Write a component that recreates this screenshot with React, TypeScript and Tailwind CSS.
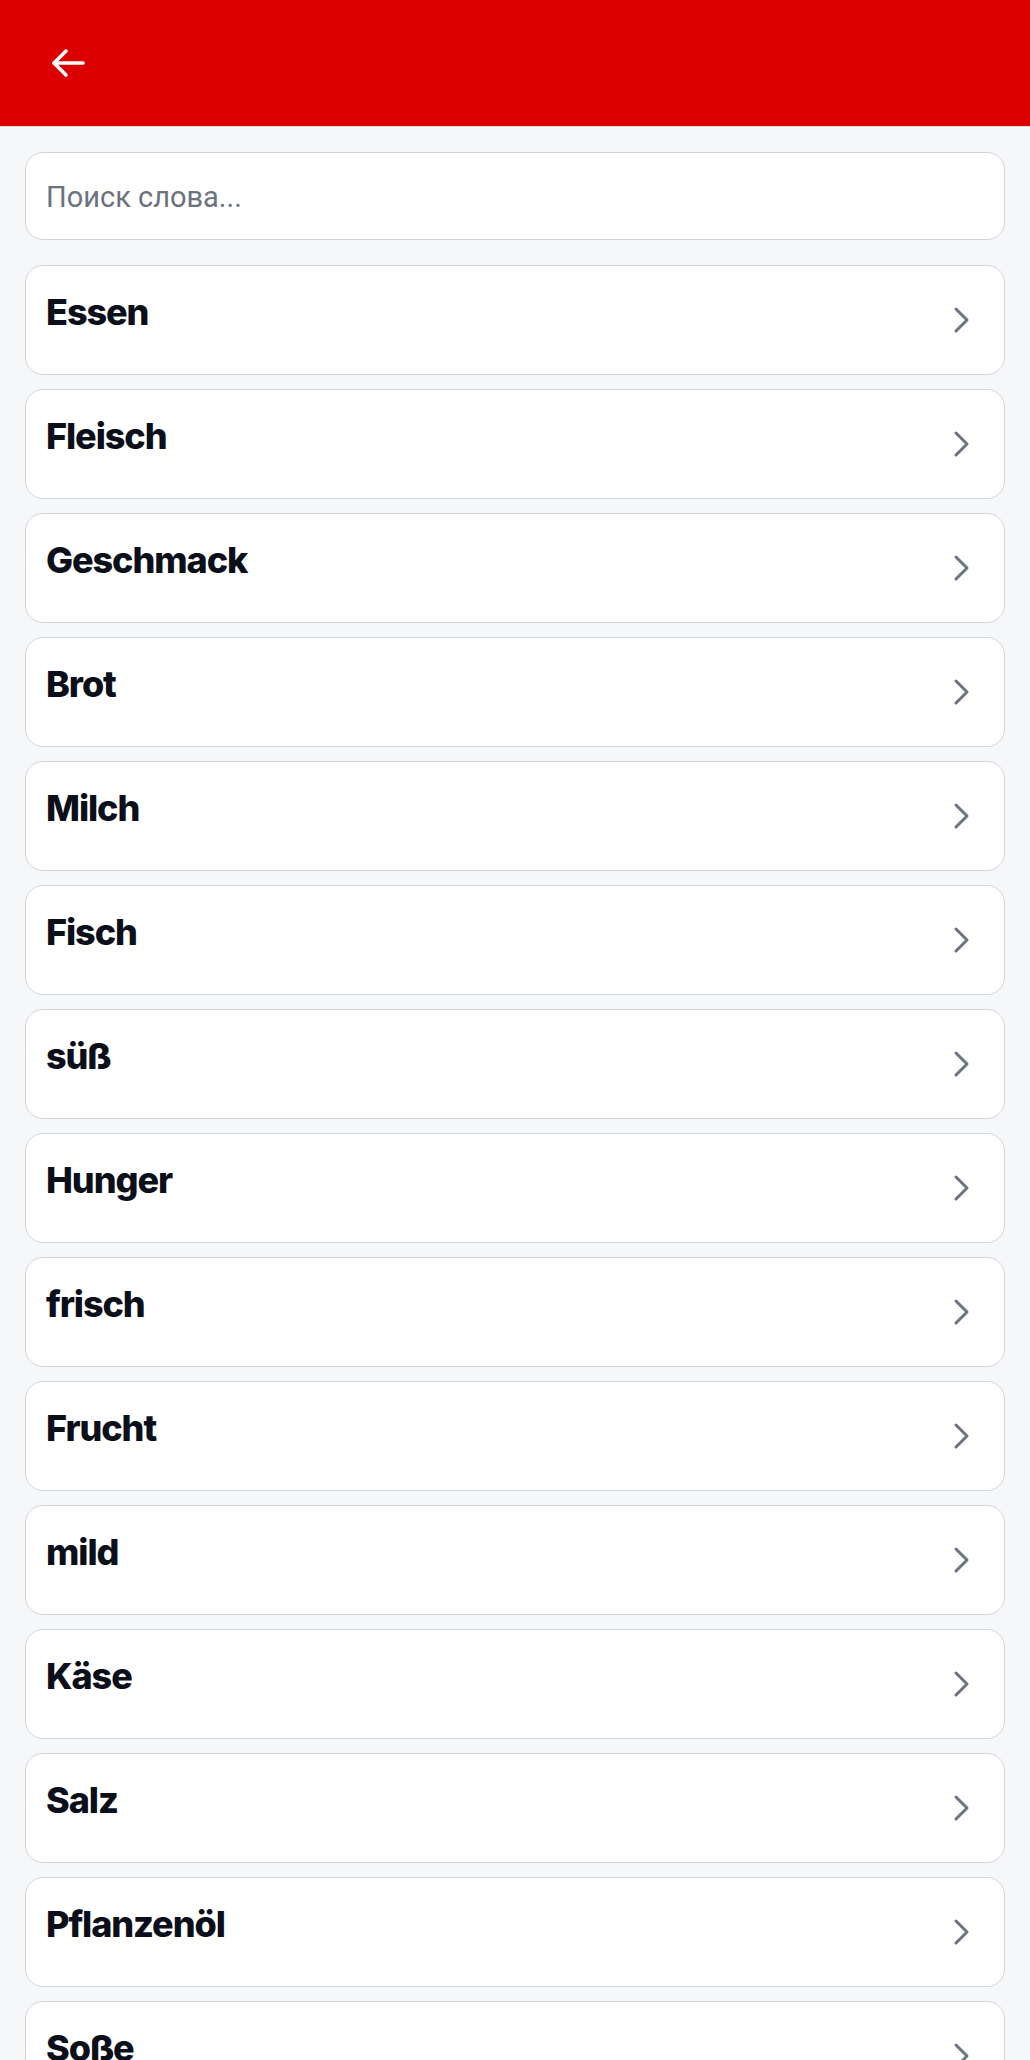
import React from 'react';

const words = [
  'Essen',
  'Fleisch',
  'Geschmack',
  'Brot',
  'Milch',
  'Fisch',
  'süß',
  'Hunger',
  'frisch',
  'Frucht',
  'mild',
  'Käse',
  'Salz',
  'Pflanzenöl',
  'Soße',
];

const BackArrow = () => (
  <svg width="36" height="32" viewBox="0 0 36 32" fill="none" stroke="white" strokeWidth="3.6" strokeLinecap="round" strokeLinejoin="round">
    <path d="M4 16h29" />
    <path d="M16 4 4 16l12 12" />
  </svg>
);

const Chevron = () => (
  <svg width="18" height="28" viewBox="0 0 18 28" fill="none" stroke="#6b7280" strokeWidth="3" strokeLinecap="round" strokeLinejoin="round">
    <path d="M3 3l11 11L3 25" />
  </svg>
);

const WordCard = ({ word }: { word: string }) => (
  <div className="flex h-[110px] shrink-0 items-start justify-between rounded-[18px] border border-[#d1d4d9] bg-white pl-[20px] pr-[33px]">
    <div className="pt-[24px] text-[36px] font-extrabold leading-[45px] tracking-[-0.03em] text-[#0b0f1a]">
      {word}
    </div>
    <div className="self-center">
      <Chevron />
    </div>
  </div>
);

export default function App() {
  return (
    <div className="min-h-screen bg-[#f6f7f9] font-['Inter',sans-serif]">
      {/* Header */}
      <header className="flex h-[127px] items-center border-b border-[#d9d9d9] bg-[#dc0000] pl-[50px]">
        <button className="flex items-center">
          <BackArrow />
        </button>
      </header>

      <main className="flex flex-col px-[25px] pt-[25px]">
        {/* Search */}
        <div className="mb-[25px] flex h-[88px] items-center rounded-[18px] border border-[#d1d4d9] bg-white px-[20px] pt-[4px]">
          <input
            type="text"
            placeholder="Поиск слова..."
            className="w-full bg-transparent font-['Roboto',sans-serif] text-[29px] text-[#111827] outline-none placeholder:text-[#6b7280]"
          />
        </div>

        {/* Word list */}
        <div className="flex flex-col gap-[14px]">
          {words.map(w => (
            <WordCard key={w} word={w} />
          ))}
        </div>
      </main>
    </div>
  );
}
